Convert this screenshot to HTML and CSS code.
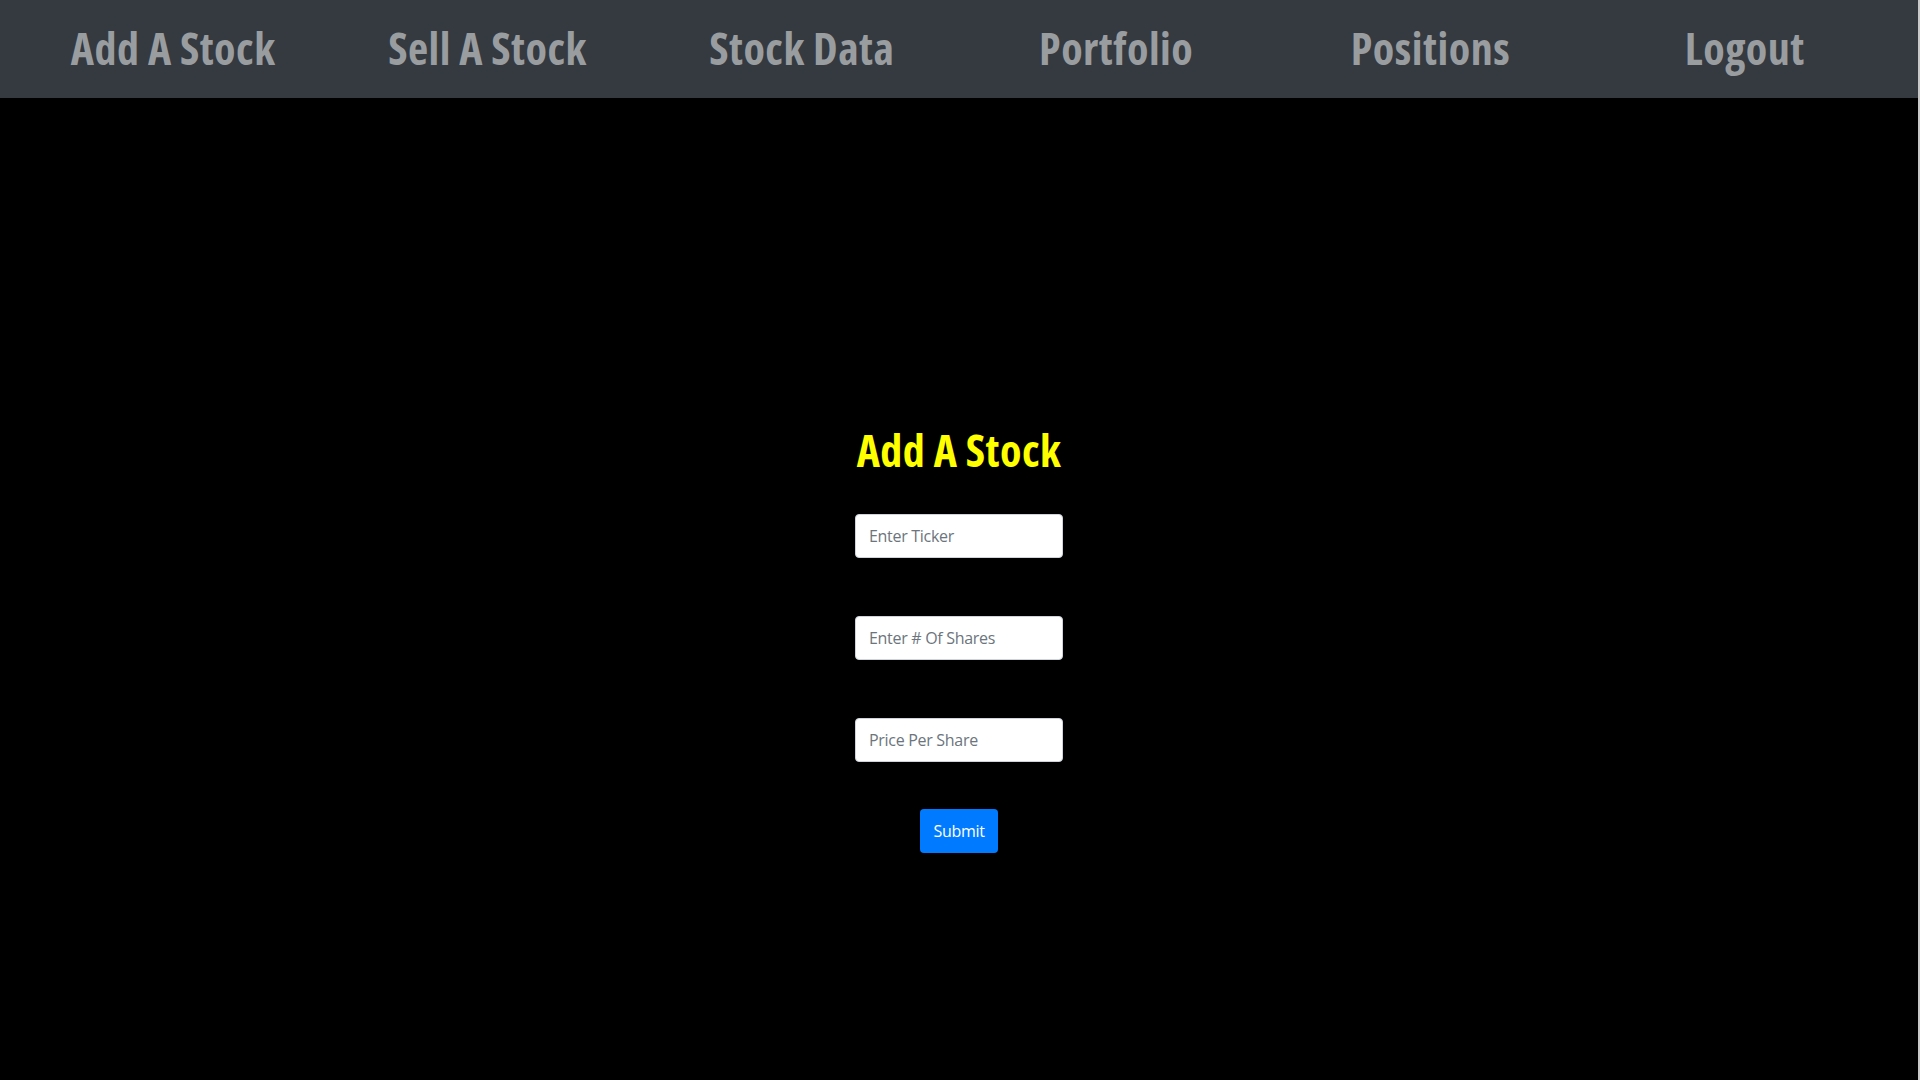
FILE: index.html
```html
<!DOCTYPE html>
<html lang="en">
<head>
<meta charset="utf-8">
<title>Add A Stock</title>
<link rel="stylesheet" href="styles.css">
</head>
<body>
<div class="page">
  <nav class="topnav">
    <a class="nav-link" href="#">Add A Stock</a>
    <a class="nav-link" href="#">Sell A Stock</a>
    <a class="nav-link" href="#">Stock Data</a>
    <a class="nav-link" href="#">Portfolio</a>
    <a class="nav-link" href="#">Positions</a>
    <a class="nav-link" href="#">Logout</a>
  </nav>
  <main class="content">
    <h1 class="title">Add A Stock</h1>
    <form class="stock-form">
      <input class="field" type="text" placeholder="Enter Ticker">
      <input class="field" type="text" placeholder="Enter # Of Shares">
      <input class="field" type="text" placeholder="Price Per Share">
      <button class="btn-submit" type="button">Submit</button>
    </form>
  </main>
</div>
</body>
</html>
```
FILE: styles.css
```css
html, body {
  margin: 0;
  padding: 0;
  background: #000;
  height: 100%;
}
body {
  font-family: "Open Sans", "Noto Sans", sans-serif;
}
.page {
  min-height: 100%;
  border-right: 2px solid #c9c9c9;
  background: #000;
  box-sizing: border-box;
}
.topnav {
  height: 98px;
  background: #343a40;
  display: grid;
  grid-template-columns: repeat(6, 1fr);
  align-items: center;
  justify-items: center;
  padding: 0 16px 3px 16px;
  box-sizing: border-box;
}
.nav-link {
  font-size: 44px;
  font-weight: 700;
  font-stretch: 75%;
  letter-spacing: 0.5px;
  color: #9a9da0;
  text-decoration: none;
}
.content {
  display: flex;
  flex-direction: column;
  align-items: center;
  padding-top: 322px;
}
.title {
  margin: 0;
  font-size: 44px;
  font-weight: 700;
  font-stretch: 75%;
  letter-spacing: 0.5px;
  color: #ffff00;
  line-height: normal;
}
.stock-form {
  display: flex;
  flex-direction: column;
  align-items: center;
  margin-top: 34px;
}
.field {
  width: 208px;
  height: 44px;
  box-sizing: border-box;
  border: 1px solid #ced4da;
  border-radius: 4px;
  background: #fff;
  padding: 0 13px;
  font-family: "Open Sans", "Noto Sans", sans-serif;
  font-size: 16px;
  letter-spacing: -0.3px;
  color: #495057;
  margin-bottom: 58px;
}
.field:last-of-type {
  margin-bottom: 47px;
}
.field::placeholder {
  color: #6c757d;
}
.btn-submit {
  width: 78px;
  height: 44px;
  border: none;
  border-radius: 4px;
  background: #007bff;
  color: #fff;
  font-family: "Open Sans", "Noto Sans", sans-serif;
  font-size: 16px;
  letter-spacing: -0.3px;
  padding: 0;
}
```
